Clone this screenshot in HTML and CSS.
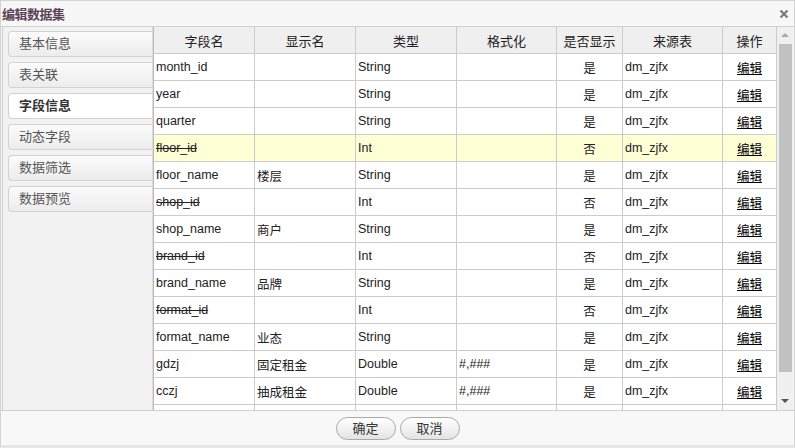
FILE: index.html
```html
<!DOCTYPE html>
<html>
<head>
<meta charset="utf-8">
<link rel="stylesheet" href="styles.css">
</head>
<body>
<div class="dialog">
  <div class="titlebar">
    <span class="title">编辑数据集</span>
    <svg class="close" width="10" height="10" viewBox="0 0 10 10"><path d="M1.5 1.5L8.5 8.5M8.5 1.5L1.5 8.5" stroke="#7a7a7a" stroke-width="2.2"/></svg>
  </div>
  <div class="main">
    <div class="side">
      <div class="tab">基本信息</div>
      <div class="tab">表关联</div>
      <div class="tab active">字段信息</div>
      <div class="tab">动态字段</div>
      <div class="tab">数据筛选</div>
      <div class="tab">数据预览</div>
    </div>
    <div class="grid">
      <div class="tablewrap">
        <table>
          <colgroup>
            <col class="c1"><col class="c2"><col class="c3"><col class="c4"><col class="c5"><col class="c6"><col class="c7">
          </colgroup>
          <thead>
            <tr><th>字段名</th><th>显示名</th><th>类型</th><th>格式化</th><th>是否显示</th><th>来源表</th><th>操作</th></tr>
          </thead>
          <tbody>
            <tr><td>month_id</td><td></td><td>String</td><td></td><td class="ctr">是</td><td>dm_zjfx</td><td class="ctr"><a>编辑</a></td></tr>
            <tr><td>year</td><td></td><td>String</td><td></td><td class="ctr">是</td><td>dm_zjfx</td><td class="ctr"><a>编辑</a></td></tr>
            <tr><td>quarter</td><td></td><td>String</td><td></td><td class="ctr">是</td><td>dm_zjfx</td><td class="ctr"><a>编辑</a></td></tr>
            <tr class="hl"><td class="del">floor_id</td><td></td><td>Int</td><td></td><td class="ctr">否</td><td>dm_zjfx</td><td class="ctr"><a>编辑</a></td></tr>
            <tr><td>floor_name</td><td>楼层</td><td>String</td><td></td><td class="ctr">是</td><td>dm_zjfx</td><td class="ctr"><a>编辑</a></td></tr>
            <tr><td class="del">shop_id</td><td></td><td>Int</td><td></td><td class="ctr">否</td><td>dm_zjfx</td><td class="ctr"><a>编辑</a></td></tr>
            <tr><td>shop_name</td><td>商户</td><td>String</td><td></td><td class="ctr">是</td><td>dm_zjfx</td><td class="ctr"><a>编辑</a></td></tr>
            <tr><td class="del">brand_id</td><td></td><td>Int</td><td></td><td class="ctr">否</td><td>dm_zjfx</td><td class="ctr"><a>编辑</a></td></tr>
            <tr><td>brand_name</td><td>品牌</td><td>String</td><td></td><td class="ctr">是</td><td>dm_zjfx</td><td class="ctr"><a>编辑</a></td></tr>
            <tr><td class="del">format_id</td><td></td><td>Int</td><td></td><td class="ctr">否</td><td>dm_zjfx</td><td class="ctr"><a>编辑</a></td></tr>
            <tr><td>format_name</td><td>业态</td><td>String</td><td></td><td class="ctr">是</td><td>dm_zjfx</td><td class="ctr"><a>编辑</a></td></tr>
            <tr><td>gdzj</td><td>固定租金</td><td>Double</td><td>#,###</td><td class="ctr">是</td><td>dm_zjfx</td><td class="ctr"><a>编辑</a></td></tr>
            <tr><td>cczj</td><td>抽成租金</td><td>Double</td><td>#,###</td><td class="ctr">是</td><td>dm_zjfx</td><td class="ctr"><a>编辑</a></td></tr>
            <tr><td></td><td></td><td></td><td></td><td></td><td></td><td></td></tr>
          </tbody>
        </table>
      </div>
      <div class="scrollbar">
        <div class="arrow up"></div>
        <div class="thumb"></div>
        <div class="arrow down"></div>
      </div>
    </div>
  </div>
  <div class="footer">
    <button class="btn">确定</button>
    <button class="btn">取消</button>
  </div>
</div>
</body>
</html>
```

FILE: styles.css
```css
html, body {
  margin: 0;
  padding: 0;
  background: #fff;
}
body {
  font-family: "Liberation Sans", "Noto Sans CJK SC", sans-serif;
  font-size: 13px;
  color: #222;
}
.dialog {
  width: 795px;
  height: 448px;
  box-sizing: border-box;
  border: 1px solid #d4d4d4;
  border-bottom: 3px solid #e6e6e6;
  background: #f6f6f6;
  display: flex;
  flex-direction: column;
}
.titlebar {
  height: 25px;
  flex: none;
  display: flex;
  align-items: center;
  justify-content: space-between;
  padding: 0 4px 0 1px;
  background: #f7f7f7;
  border-bottom: 1px solid #d0d0d0;
}
.title {
  font-weight: bold;
  font-size: 13px;
  color: #5b4357;
  letter-spacing: -0.5px;
}
.close {
  display: block;
  margin-right: 1px;
}
.main {
  flex: none;
  height: 383px;
  display: flex;
  margin-left: 1px;
  margin-right: 1px;
  border-left: 1px solid #cfcfcf;
  border-right: 1px solid #cfcfcf;
  background: #fff;
}
.side {
  width: 144px;
  flex: none;
  background: #f2f2f2;
  padding: 4px 0 0 5px;
  border-right: 1px solid #dcdcdc;
}
.tab {
  height: 24px;
  line-height: 24px;
  margin-bottom: 5px;
  border: 1px solid #d2d2d2;
  border-right: none;
  border-radius: 4px 0 0 4px;
  background: linear-gradient(#fbfbfb, #ececec);
  padding-left: 10px;
  color: #555;
  font-size: 13px;
}
.tab.active {
  background: #fff;
  font-weight: bold;
  color: #333;
}
.grid {
  flex: 1;
  display: flex;
  border-left: 1px solid #b9b9b9;
  min-width: 0;
}
.tablewrap {
  width: 623px;
  flex: none;
  overflow: hidden;
}
table {
  table-layout: fixed;
  border-collapse: separate;
  border-spacing: 0;
  width: 623px;
}
col.c1, col.c2, col.c3 { width: 101px; }
col.c4 { width: 100px; }
col.c5 { width: 66px; }
col.c6 { width: 100px; }
col.c7 { width: 54px; }
th, td {
  box-sizing: border-box;
  height: 27px;
  padding: 0 0 0 2px;
  border-right: 1px solid #cccccc;
  border-bottom: 1px solid #cccccc;
  white-space: nowrap;
  overflow: hidden;
  font-weight: normal;
  font-size: 13px;
  vertical-align: middle;
}
th {
  background: #efefef;
  text-align: center;
  color: #222;
  padding: 0;
}
td {
  text-align: left;
  color: #222;
  font-size: 12.5px;
}
td.ctr {
  text-align: center;
  padding: 0;
}
td.del {
  text-decoration: line-through;
}
tr.hl td {
  background: #ffffd6;
}
td a {
  color: #000;
  text-decoration: underline;
}
.scrollbar {
  width: 16px;
  flex: none;
  background: #f0f0f0;
  display: flex;
  flex-direction: column;
  align-items: center;
}
.arrow {
  height: 17px;
  width: 16px;
  flex: none;
  position: relative;
}
.arrow::after {
  content: "";
  position: absolute;
  left: 4px;
  width: 0;
  height: 0;
  border-left: 4px solid transparent;
  border-right: 4px solid transparent;
}
.arrow.up::after {
  top: 6px;
  border-bottom: 4px solid #a8a8a8;
}
.arrow.down::after {
  top: 6px;
  border-top: 4px solid #555;
}
.thumb {
  width: 13px;
  height: 328px;
  background: #c1c1c1;
  margin-left: 1px;
}
.scrollbar .down {
  margin-top: auto;
  margin-bottom: 0;
}
.footer {
  flex: 1;
  display: flex;
  justify-content: center;
  align-items: flex-start;
  gap: 4px;
  padding-top: 6px;
  border-top: 1px solid #cfcfcf;
  background: #f8f8f8;
}
.btn {
  width: 60px;
  height: 23px;
  line-height: 21px;
  border: 1px solid #a9a9a9;
  border-radius: 12px;
  background: linear-gradient(#ffffff, #e4e4e4);
  font-family: "Liberation Sans", "Noto Sans CJK SC", sans-serif;
  font-size: 13px;
  color: #333;
  padding: 0;
}
```
